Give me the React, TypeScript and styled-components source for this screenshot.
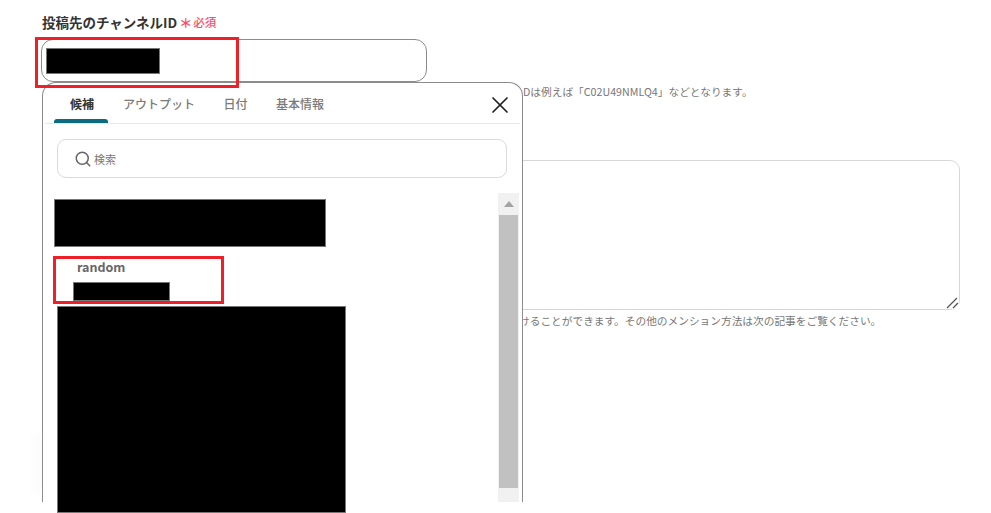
import styled, { createGlobalStyle } from "styled-components"
import { Search, X } from "lucide-react"

const GlobalStyle = createGlobalStyle`
  html, body {
    margin: 0;
    padding: 0;
    background: #fff;
    overflow: hidden;
  }
  * { box-sizing: border-box; }
`

const Page = styled.div`
  position: relative;
  width: 991px;
  height: 513px;
  overflow: hidden;
  background: #fff;
  font-family: "Noto Sans CJK JP", "Noto Sans", sans-serif;
`

const Form = styled.div`
  display: flex;
  flex-direction: column;
  width: 960px;
  padding: 13px 0 0 42px;
`

const LabelRow = styled.div`
  display: flex;
  align-items: center;
  height: 17px;
`

const Label = styled.label`
  font-size: 13.5px;
  font-weight: 700;
  color: #333;
`

const Asterisk = styled.span`
  margin: 3px 1px 0 2px;
  font-size: 13px;
  line-height: 14px;
  font-weight: 700;
  color: #ff4b63;
`

const Required = styled.span`
  font-size: 11.5px;
  font-weight: 500;
  color: #ff4b63;
`

const IdInput = styled.div`
  width: 386px;
  height: 43px;
  margin: 9px 0 0 -1px;
  border: 1px solid #8c8c8c;
  border-radius: 12px;
`

// the start of both hints sits under the popup, so only the visible part is written
const Help = styled.p<{ $indent: number }>`
  margin: 2px 0 0 ${(p) => p.$indent}px;
  font-size: 10.7px;
  line-height: 16px;
  color: #777;
  white-space: nowrap;
`

const MessageWrap = styled.div`
  position: relative;
  width: 918px;
  height: 150px;
  margin: 60px 0 1px;
`

const MessageBox = styled.textarea`
  display: block;
  width: 100%;
  height: 100%;
  border: 1px solid #d4d8dd;
  border-radius: 10px;
  outline: none;
  resize: none;
  background: #fff;
`

const ResizeGrip = styled.svg`
  position: absolute;
  right: 1px;
  bottom: 1px;
  width: 13px;
  height: 12px;
  background: #fff;
`

const Glow = styled.div`
  position: absolute;
  left: 28px;
  top: 435px;
  width: 14px;
  height: 60px;
  background: linear-gradient(to right, #fff, #f8faf9);
  filter: blur(3px);
`

const Popup = styled.div`
  position: absolute;
  left: 42px;
  top: 82px;
  display: flex;
  flex-direction: column;
  width: 481px;
  height: 420px;
  padding: 0 3px;
  background: #fff;
  border: 1px solid #8c8c8c;
  border-bottom: none;
  border-radius: 14px 14px 0 0;
`

const TabBar = styled.div`
  display: flex;
  align-items: stretch;
  justify-content: space-between;
  height: 41px;
  margin: 0 -1px;
  padding: 0 6px 0 9px;
  border-bottom: 1px solid #e6e8ea;
`

const Tabs = styled.div`
  display: flex;
`

const Tab = styled.div<{ $active?: boolean }>`
  position: relative;
  display: flex;
  align-items: center;
  padding: ${(p) => (p.$active ? "0 14px 0 16px" : "0 13.5px 0 15px")};
  font-size: 12px;
  font-weight: ${(p) => (p.$active ? 700 : 500)};
  color: ${(p) => (p.$active ? "#333" : "#7a7a7a")};

  &::after {
    content: "";
    display: ${(p) => (p.$active ? "block" : "none")};
    position: absolute;
    left: 0;
    right: 0;
    bottom: 0;
    height: 4px;
    background: #0b6b82;
    border-radius: 3px 3px 0 0;
  }
`

const CloseButton = styled.button`
  align-self: center;
  display: flex;
  margin-top: 3px;
  padding: 0;
  border: none;
  background: none;
  color: #222;
`

const SearchBox = styled.div`
  display: flex;
  align-items: center;
  gap: 2px;
  width: 450px;
  height: 39px;
  margin: 15px 0 0 11px;
  padding: 0 16px;
  border: 1px solid #d8dbdf;
  border-radius: 9px;
  color: #777;
  font-size: 11px;

  svg {
    color: #666;
  }
`

const ListArea = styled.div`
  position: relative;
  display: flex;
  flex: 1;
  justify-content: flex-end;
  margin-top: 15px;
`

const Option = styled.div`
  position: absolute;
  left: 31px;
  top: 65px;
  font-size: 12.5px;
  font-weight: 600;
  line-height: 18px;
  color: #666;
`

const Scrollbar = styled.div`
  display: flex;
  flex-direction: column;
  align-items: center;
  width: 21px;
  padding: 0 1px;
  background: #f1f1f1;
`

const ScrollArrow = styled.div`
  width: 0;
  height: 0;
  margin-top: 8px;
  border-left: 5px solid transparent;
  border-right: 5px solid transparent;
  border-bottom: 6px solid #a3a3a3;
`

const ScrollThumb = styled.div`
  width: 100%;
  height: 273px;
  margin-top: 8px;
  background: #c1c1c1;
`

const Redaction = styled.div`
  position: absolute;
  background: #000;
  border: 1px solid #777;
`

const InputRedaction = styled(Redaction)`
  left: 46px;
  top: 48px;
  width: 114px;
  height: 26px;
`

const ChannelRedaction = styled(Redaction)`
  left: 54px;
  top: 199px;
  width: 272px;
  height: 48px;
`

const RandomIdRedaction = styled(Redaction)`
  left: 73px;
  top: 282px;
  width: 97px;
  height: 19px;
`

const RestRedaction = styled(Redaction)`
  left: 57px;
  top: 306px;
  width: 289px;
  height: 207px;
`

const Callout = styled.div`
  position: absolute;
  border: 3px solid #ee1f26;
`

const InputCallout = styled(Callout)`
  left: 35px;
  top: 37px;
  width: 204px;
  height: 51px;
`

const OptionCallout = styled(Callout)`
  left: 53px;
  top: 256px;
  width: 171px;
  height: 48px;
`

export default function App() {
  return (
    <Page>
      <GlobalStyle />
      <Form>
        <LabelRow>
          <Label>投稿先のチャンネルID</Label>
          <Asterisk>＊</Asterisk>
          <Required>必須</Required>
        </LabelRow>
        <IdInput />
        <Help $indent={481}>Dは例えば「C02U49NMLQ4」などとなります。</Help>
        <MessageWrap>
          <MessageBox />
          <ResizeGrip viewBox="0 0 13 12">
            <path d="M1 11 L11 1 M7 11 L12 6" stroke="#555" strokeWidth="1.3" fill="none" />
          </ResizeGrip>
        </MessageWrap>
        <Help $indent={477}>けることができます。その他のメンション方法は次の記事をご覧ください。</Help>
      </Form>

      <Glow />
      <Popup>
        <TabBar>
          <Tabs>
            <Tab $active>候補</Tab>
            <Tab>アウトプット</Tab>
            <Tab>日付</Tab>
            <Tab>基本情報</Tab>
          </Tabs>
          <CloseButton aria-label="閉じる">
            <X size={28} strokeWidth={1.5} />
          </CloseButton>
        </TabBar>
        <SearchBox>
          <Search size={18} strokeWidth={2} />
          検索
        </SearchBox>
        <ListArea>
          <Option>random</Option>
          <Scrollbar>
            <ScrollArrow />
            <ScrollThumb />
          </Scrollbar>
        </ListArea>
      </Popup>

      <InputRedaction />
      <ChannelRedaction />
      <RandomIdRedaction />
      <RestRedaction />
      <InputCallout />
      <OptionCallout />
    </Page>
  )
}
